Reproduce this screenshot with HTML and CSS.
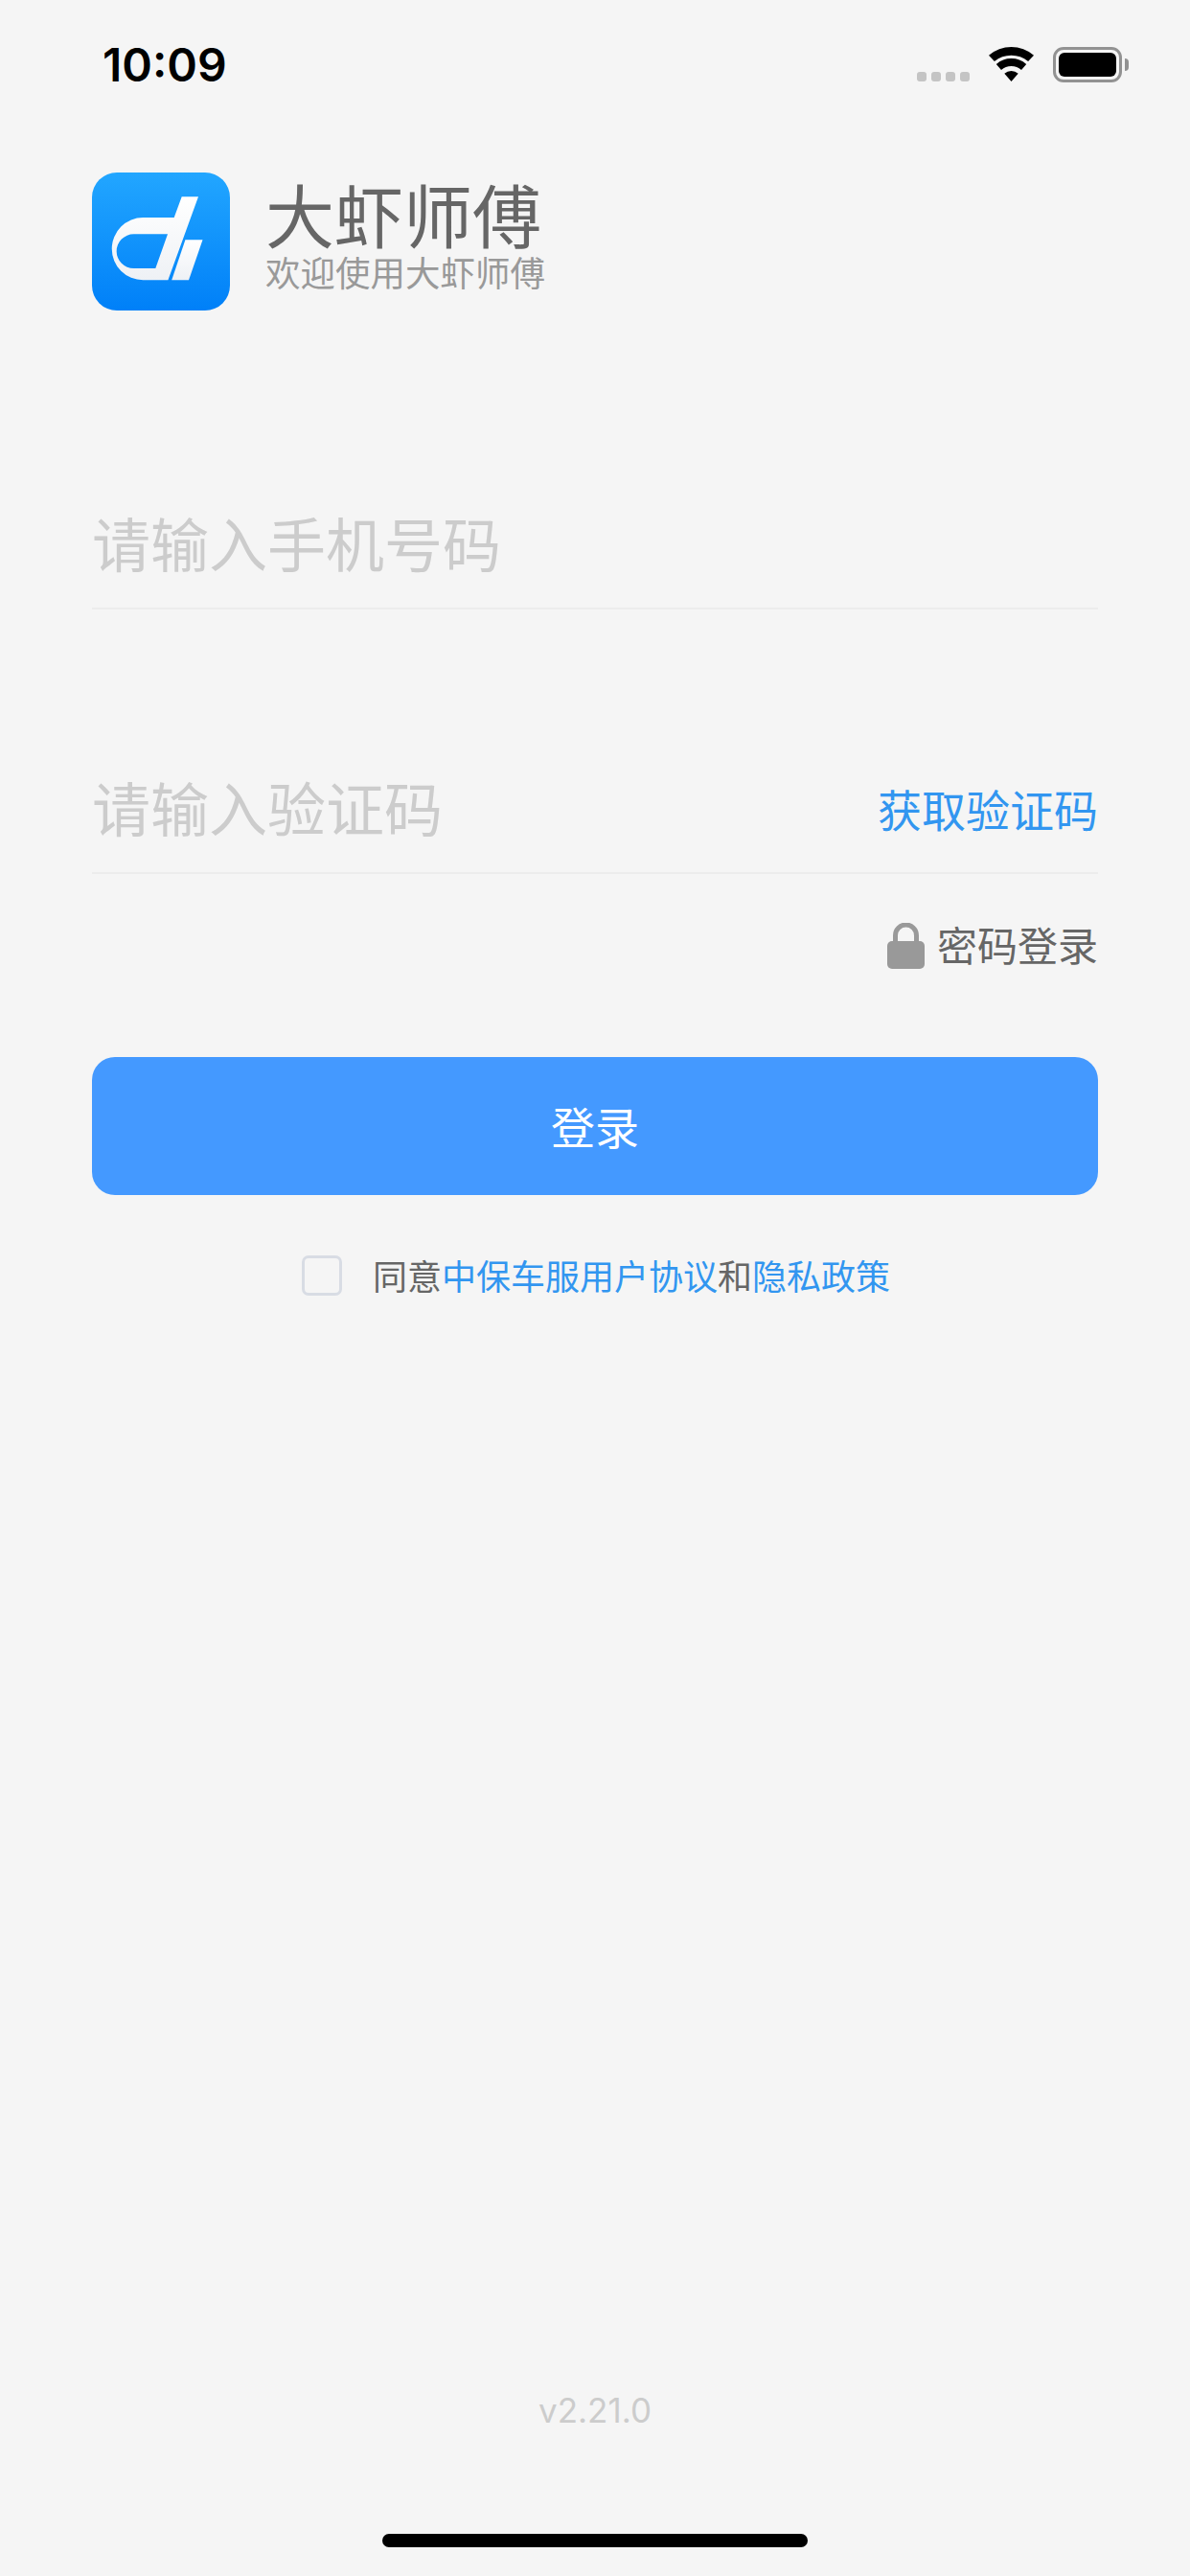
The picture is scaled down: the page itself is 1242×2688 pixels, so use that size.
FILE: index.html
```html
<!DOCTYPE html>
<html lang="zh-CN">
<head>
<meta charset="utf-8">
<title>大虾师傅</title>
<link rel="stylesheet" href="styles.css">
</head>
<body>
<div class="page">
  <div class="statusbar">
    <span class="time">10:09</span>
    <div class="status-icons">
      <div class="signal"><i></i><i></i><i></i><i></i></div>
      <svg class="wifi" width="47" height="36" viewBox="0 0 47 36"><path d="M23.5 36L16.3 27.700A11 11 0 0 1 30.700 27.700Z M13 23.900A16 16 0 0 1 34 23.900L39.200 17.900A24 24 0 0 0 7.800 17.900Z M5.900 14.900A28 28 0 0 1 41.100 14.900L47 8.800A36 36 0 0 0 0 8.800Z" fill="#000"/></svg>
      <div class="battery"><div class="battery-fill"></div></div>
      <div class="battery-cap"></div>
    </div>
  </div>

  <main class="content">
    <header class="brand">
      <div class="logo">
        <svg width="144" height="144" viewBox="0 0 144 144"><defs><linearGradient id="w" x1="0" y1="0" x2="0" y2="1"><stop offset="0" stop-color="#fff"/><stop offset="1" stop-color="#eef1f5"/></linearGradient></defs><path fill-rule="evenodd" fill="url(#w)" d="M111 25.300H93.700L85.700 47H53.400A32.650 32.650 0 0 0 53.400 112.300H79.400ZM79 64.300L66.300 100H43.500A17.850 17.850 0 0 1 43.500 64.300Z"/><path fill="url(#w)" d="M97.400 70.300H115.500L101 112.300H83.200Z"/></svg>
      </div>
      <div class="brand-text">
        <div class="brand-name">大虾师傅</div>
        <div class="brand-sub">欢迎使用大虾师傅</div>
      </div>
    </header>

    <div class="field field-phone">
      <span class="placeholder">请输入手机号码</span>
    </div>
    <div class="field field-code">
      <span class="placeholder">请输入验证码</span>
      <span class="get-code">获取验证码</span>
    </div>

    <div class="pwd-row">
      <svg class="lock" width="39" height="48" viewBox="0 0 39 48"><path d="M8.500 20V13A11 11 0 0 1 30.500 13V20" fill="none" stroke="#999" stroke-width="5"/><rect x="0" y="19" width="39" height="29" rx="5" fill="#999"/></svg>
      <span class="pwd-text">密码登录</span>
    </div>

    <button class="login-btn" type="button"><span class="login-label">登录</span></button>

    <div class="agree">
      <span class="checkbox"></span>
      <span class="agree-text">同意<span class="link">中保车服用户协议</span>和<span class="link">隐私政策</span></span>
    </div>
  </main>

  <footer class="footer">
    <div class="version">v2.21.0</div>
    <div class="home-indicator"></div>
  </footer>
</div>
</body>
</html>
```

FILE: styles.css
```css
* { box-sizing: border-box; }
html, body { margin: 0; padding: 0; }
body {
  background: #f5f5f5;
  font-family: "Noto Sans CJK SC", "Noto Sans", sans-serif;
  font-weight: 400;
}
.page {
  width: 1242px;
  height: 2688px;
  display: flex;
  flex-direction: column;
  overflow: hidden;
}
.statusbar {
  height: 132px;
  padding: 44px 64px 0 107px;
  display: flex;
  justify-content: space-between;
  align-items: flex-start;
}
.time {
  font-family: Inter, "Liberation Sans", sans-serif;
  font-size: 48px;
  font-weight: 600;
  line-height: 47px;
  color: #000;
}
.status-icons {
  display: flex;
  align-items: flex-end;
  margin-top: 5px;
  height: 37px;
}
.signal {
  display: flex;
  gap: 5px;
  margin-right: 20px;
  margin-bottom: 1px;
}
.signal i {
  display: block;
  width: 10px;
  height: 10px;
  border-radius: 3px;
  background: #c4c4c4;
}
.wifi { display: block; margin-bottom: 1px; }
.battery {
  width: 72px;
  height: 37px;
  margin-left: 20px;
  border: 3px solid #929292;
  border-radius: 11px;
  padding: 3px;
}
.battery-fill {
  width: 100%;
  height: 100%;
  background: #000;
  border-radius: 6px;
}
.battery-cap {
  width: 4px;
  height: 13px;
  background: #929292;
  border-radius: 0 6px 6px 0;
  margin: 0 0 12px 3px;
}
.content {
  padding: 48px 96px 0;
  display: flex;
  flex-direction: column;
}
.brand {
  display: flex;
  align-items: flex-start;
  gap: 37px;
}
.logo {
  width: 144px;
  height: 144px;
  border-radius: 26px;
  background: linear-gradient(180deg, #22a6ff 0%, #0080f8 100%);
}
.logo svg { display: block; }
.brand-name {
  font-size: 72px;
  line-height: 84px;
  color: #666;
}
.brand-sub {
  font-size: 36.5px;
  line-height: 40px;
  color: #999;
}
.field {
  display: flex;
  align-items: center;
  justify-content: space-between;
  height: 134px;
  border-bottom: 2px solid #ececec;
}
.field-phone { margin-top: 178px; }
.field-code { margin-top: 142px; }
.placeholder {
  font-size: 61px;
  line-height: 70px;
  color: #ccc;
  margin-bottom: 4px;
}
.get-code {
  font-size: 46px;
  line-height: 60px;
  color: #3296f0;
  margin-bottom: 3px;
}
.pwd-row {
  display: flex;
  justify-content: flex-end;
  align-items: flex-start;
  gap: 13px;
  height: 50px;
  margin-top: 49px;
}
.lock { display: block; align-self: flex-end; }
.pwd-text {
  font-size: 42px;
  line-height: 48px;
  color: #666;
}
.login-btn {
  display: block;
  width: 1050px;
  height: 144px;
  margin-top: 92px;
  border: 0;
  padding: 0 0 3px;
  border-radius: 24px;
  background: #4499ff;
  color: #fff;
  font-family: inherit;
  font-weight: 400;
  font-size: 46px;
}
.agree {
  display: flex;
  align-items: center;
  height: 42px;
  margin-top: 63px;
  padding-left: 219px;
}
.checkbox {
  width: 42px;
  height: 42px;
  border: 3px solid #d8dce4;
  border-radius: 7px;
  margin-right: 32px;
}
.agree-text {
  font-size: 36px;
  line-height: 42px;
  color: #666;
  white-space: nowrap;
  margin-bottom: 3px;
}
.link { color: #3296f0; }
.footer {
  margin-top: auto;
  display: flex;
  flex-direction: column;
  align-items: center;
  padding-bottom: 30px;
}
.version {
  font-family: Inter, "Liberation Sans", sans-serif;
  font-weight: 400;
  font-size: 35px;
  line-height: 40px;
  color: #ccc;
  margin-bottom: 109px;
}
.home-indicator {
  width: 444px;
  height: 14px;
  border-radius: 7px;
  background: #000;
}
```
